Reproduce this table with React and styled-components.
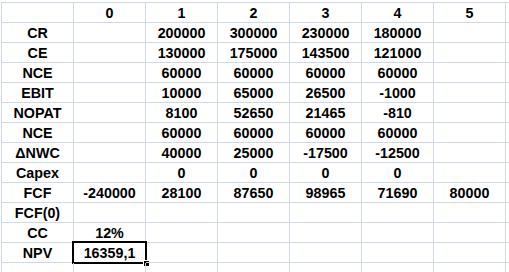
import React from "react";
import styled, { createGlobalStyle } from "styled-components";

const Global = createGlobalStyle`
  html, body { margin: 0; padding: 0; background: #fff; overflow: hidden; }
  body { font-family: "Liberation Sans", Arial, sans-serif; }
`;

const Page = styled.div`
  padding: 2px 0 0 1px;
  width: 509px;
  height: 272px;
  box-sizing: border-box;
  overflow: hidden;
`;

const Sheet = styled.div`
  display: grid;
  grid-template-columns: repeat(8, 72px);
  grid-auto-rows: 20px;
  border-left: 1px solid #d0d7e5;
  border-top: 1px solid #d0d7e5;
  width: max-content;
`;

const Cell = styled.div`
  position: relative;
  box-sizing: border-box;
  border-right: 1px solid #d0d7e5;
  border-bottom: 1px solid #d0d7e5;
  display: flex;
  align-items: flex-end;
  justify-content: center;
  padding-bottom: 1px;
  font-size: 14.3px;
  font-weight: bold;
  color: #000;
  line-height: 15px;
  white-space: nowrap;
`;

const Selection = styled.div`
  position: absolute;
  left: -2px;
  top: -2px;
  right: -2px;
  bottom: -2px;
  border: 2px solid #000;
  pointer-events: none;
`;

const Handle = styled.div`
  position: absolute;
  right: -4px;
  bottom: -4px;
  width: 5px;
  height: 5px;
  background: #000;
  border-left: 1px solid #fff;
  border-top: 1px solid #fff;
`;

const rows = [
  ["", "0", "1", "2", "3", "4", "5"],
  ["CR", "", "200000", "300000", "230000", "180000", ""],
  ["CE", "", "130000", "175000", "143500", "121000", ""],
  ["NCE", "", "60000", "60000", "60000", "60000", ""],
  ["EBIT", "", "10000", "65000", "26500", "-1000", ""],
  ["NOPAT", "", "8100", "52650", "21465", "-810", ""],
  ["NCE", "", "60000", "60000", "60000", "60000", ""],
  ["\u0394NWC", "", "40000", "25000", "-17500", "-12500", ""],
  ["Capex", "", "0", "0", "0", "0", ""],
  ["FCF", "-240000", "28100", "87650", "98965", "71690", "80000"],
  ["FCF(0)", "", "", "", "", "", ""],
  ["CC", "12%", "", "", "", "", ""],
  ["NPV", "16359,1", "", "", "", "", ""],
  ["", "", "", "", "", "", ""],
];

export default function App() {
  return (
    <>
      <Global />
      <Page>
        <Sheet>
          {rows.map((r, ri) =>
            [...r, ""].map((v, ci) => {
              const selected = ri === 12 && ci === 1;
              return (
                <Cell key={`${ri}-${ci}`}>
                  {v}
                  {selected && (
                    <Selection>
                      <Handle />
                    </Selection>
                  )}
                </Cell>
              );
            })
          )}
        </Sheet>
      </Page>
    </>
  );
}
